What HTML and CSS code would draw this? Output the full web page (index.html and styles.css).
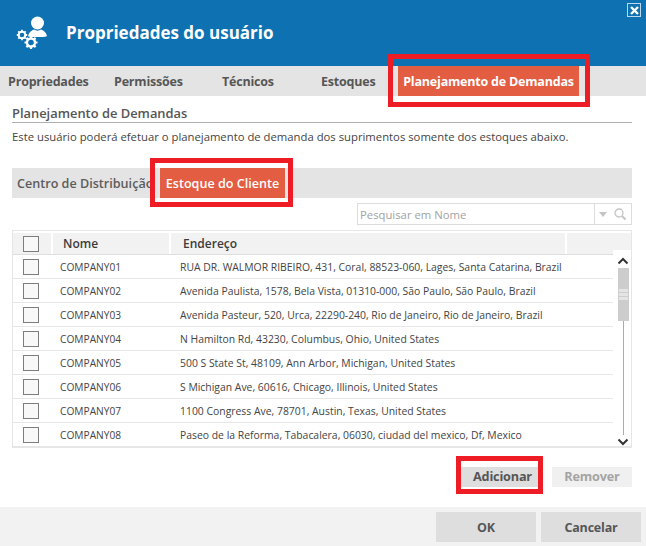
FILE: index.html
```html
<!DOCTYPE html>
<html lang="pt">
<head>
<meta charset="utf-8">
<title>Propriedades do usuário</title>
<link rel="stylesheet" href="styles.css">
</head>
<body>
<div class="dialog">
  <header class="header">
    <svg class="logo" width="40" height="40" viewBox="0 0 40 40">
      <circle cx="21.500" cy="9" r="6.500" fill="#fff"/>
      <path d="M12 22c1-4 4-6 6-6.500 2 1.500 5 1.500 7 0 2 .5 5 2.500 6 6.500-1 .8-3 1-6 1H16c-2 0-3-.2-4-1z" fill="#fff"/>
      <g fill="none" stroke="#fff">
        <circle cx="6" cy="21" r="3.300" stroke-width="2"/>
        <circle cx="15" cy="28.500" r="4" stroke-width="2.400"/>
        <path d="M6 15.800v2M6 24.200v2M.8 21h2M9.200 21h2M2.300 17.300l1.400 1.400M8.300 23.300l1.400 1.400M2.300 24.700l1.400-1.400M8.300 18.700l1.400-1.400" stroke-width="1.800"/>
        <path d="M15 22v2.500M15 32.500V35M8.500 28.500H11M19 28.500h2.500M10.400 23.900l1.800 1.800M17.800 31.300l1.800 1.800M10.400 33.100l1.800-1.800M17.800 25.700l1.800-1.800" stroke-width="2.200"/>
      </g>
    </svg>
    <h1 class="title">Propriedades do usuário</h1>
    <div class="close"><svg width="11" height="11" viewBox="0 0 11 11"><path d="M2 2l7 7M9 2l-7 7" stroke="#fff" stroke-width="2.400"/></svg></div>
  </header>
  <nav class="tabs">
    <span class="tab tab-1">Propriedades</span>
    <span class="tab tab-2">Permissões</span>
    <span class="tab tab-3">Técnicos</span>
    <span class="tab tab-4">Estoques</span>
    <span class="tab active">Planejamento de Demandas</span>
  </nav>
  <main class="content">
    <h2 class="section-title">Planejamento de Demandas</h2>
    <p class="desc">Este usuário poderá efetuar o planejamento de demanda dos suprimentos somente dos estoques abaixo.</p>
    <div class="subtabs">
      <span class="subtab">Centro de Distribuição</span>
      <span class="subtab active">Estoque do Cliente</span>
    </div>
    <div class="search-row">
      <div class="search">
        <span class="search-text">Pesquisar em Nome</span>
        <span class="search-tools">
          <svg width="8" height="5" viewBox="0 0 8 5"><path d="M0 0h8L4 5z" fill="#c4c4c4"/></svg>
          <svg width="12" height="12" viewBox="0 0 12 12"><circle cx="5" cy="5" r="4" fill="none" stroke="#c4c4c4" stroke-width="1.300"/><path d="M8 8l3.500 3.500" stroke="#c4c4c4" stroke-width="2"/></svg>
        </span>
      </div>
    </div>
    <div class="grid">
      <div class="grid-head">
        <div class="hc hc-check"><span class="check"></span></div>
        <div class="hc hc-name">Nome</div>
        <div class="hc hc-addr">Endereço</div>
        <div class="hc hc-rest"></div>
      </div>
      <div class="grid-body">
        <div class="rows">
          <div class="row"><span class="cell-check"><span class="check"></span></span><span class="cell-name">COMPANY01</span><span class="cell-addr">RUA DR. WALMOR RIBEIRO, 431, Coral, 88523-060, Lages, Santa Catarina, Brazil</span></div>
          <div class="row"><span class="cell-check"><span class="check"></span></span><span class="cell-name">COMPANY02</span><span class="cell-addr">Avenida Paulista, 1578, Bela Vista, 01310-000, São Paulo, São Paulo, Brazil</span></div>
          <div class="row"><span class="cell-check"><span class="check"></span></span><span class="cell-name">COMPANY03</span><span class="cell-addr">Avenida Pasteur, 520, Urca, 22290-240, Rio de Janeiro, Rio de Janeiro, Brazil</span></div>
          <div class="row"><span class="cell-check"><span class="check"></span></span><span class="cell-name">COMPANY04</span><span class="cell-addr">N Hamilton Rd, 43230, Columbus, Ohio, United States</span></div>
          <div class="row"><span class="cell-check"><span class="check"></span></span><span class="cell-name">COMPANY05</span><span class="cell-addr">500 S State St, 48109, Ann Arbor, Michigan, United States</span></div>
          <div class="row"><span class="cell-check"><span class="check"></span></span><span class="cell-name">COMPANY06</span><span class="cell-addr">S Michigan Ave, 60616, Chicago, Illinois, United States</span></div>
          <div class="row"><span class="cell-check"><span class="check"></span></span><span class="cell-name">COMPANY07</span><span class="cell-addr">1100 Congress Ave, 78701, Austin, Texas, United States</span></div>
          <div class="row"><span class="cell-check"><span class="check"></span></span><span class="cell-name">COMPANY08</span><span class="cell-addr">Paseo de la Reforma, Tabacalera, 06030, ciudad del mexico, Df, Mexico</span></div>
        </div>
        <div class="scrollbar">
          <svg class="arrow" width="12" height="8" viewBox="0 0 12 8"><path d="M1.500 6.500L6 2l4.500 4.500" fill="none" stroke="#333" stroke-width="2"/></svg>
          <div class="track">
            <div class="thumb"><span></span><span></span><span></span></div>
          </div>
          <svg class="arrow" width="12" height="8" viewBox="0 0 12 8"><path d="M1.500 1.500L6 6l4.500-4.500" fill="none" stroke="#333" stroke-width="2"/></svg>
        </div>
      </div>
    </div>
    <div class="actions">
      <span class="btn btn-add">Adicionar</span>
      <span class="btn btn-remove">Remover</span>
    </div>
  </main>
  <footer class="footer">
    <span class="btn-foot">OK</span>
    <span class="btn-foot">Cancelar</span>
  </footer>
  <div class="mark mark-tab"></div>
  <div class="mark mark-sub"></div>
  <div class="mark mark-add"></div>
</div>
</body>
</html>
```
FILE: styles.css
```css
* { box-sizing: border-box; }
html, body { margin: 0; padding: 0; }
body { font-family: "Open Sans", "Noto Sans", sans-serif; background: #fff; color: #444; }
.dialog { position: relative; width: 646px; height: 546px; overflow: hidden; display: flex; flex-direction: column; }

.header { height: 66px; background: #0e72b2; display: flex; align-items: center; padding-left: 16px; position: relative; flex: none; }
.logo { flex: none; margin-top: 2px; }
.title { margin: 0 0 1px 10px; font-size: 17px; font-weight: 700; color: #fff; letter-spacing: 0; }
.close { position: absolute; top: 3px; right: 5px; width: 14px; height: 14px; border: 1px solid #bcd9ec; display: flex; align-items: center; justify-content: center; }

.tabs { height: 30px; background: #e4e4e4; display: flex; align-items: stretch; flex: none; padding-left: 8px; }
.tab { font-size: 12.500px; font-weight: 700; letter-spacing: -0.200px; color: #565656; display: flex; align-items: center; white-space: nowrap; }
.tab-1 { width: 106px; }
.tab-2 { width: 108px; }
.tab-3 { width: 99px; }
.tab-4 { width: 77px; }
.tab.active { background: #e35d42; color: #fff; width: 181px; justify-content: center; }

.content { flex: 1; padding: 0 14px 0 12px; display: flex; flex-direction: column; }
.section-title { margin: 0; height: 27px; padding-top: 8px; font-size: 12.900px; line-height: 18px; font-weight: 600; color: #565656; border-bottom: 1px solid #b0b0b0; }
.desc { margin: 0; height: 45px; padding-top: 6px; font-size: 11.300px; line-height: 16px; color: #444; white-space: nowrap; }

.subtabs { height: 30px; background: #e4e4e4; display: flex; align-items: stretch; flex: none; }
.subtab { font-size: 12.600px; font-weight: 600; color: #5c5c5c; display: flex; align-items: center; white-space: nowrap; }
.subtabs .subtab:first-child { width: 148px; padding-left: 5px; overflow: hidden; }
.subtab.active { background: #e35d42; color: #fff; width: 125px; justify-content: center; }

.search-row { display: flex; justify-content: flex-end; margin-top: 5px; flex: none; }
.search { width: 275px; height: 22px; border: 1px solid #dcdcdc; display: flex; align-items: center; background: #fff; }
.search-text { flex: 1; font-size: 11.300px; color: #a2a2a2; padding-left: 2px; }
.search-tools { width: 37px; height: 20px; border-left: 1px solid #dcdcdc; display: flex; align-items: center; justify-content: space-between; padding: 0 5px 0 4px; }

.grid { margin-top: 5px; height: 218px; border: 1px solid #e6e6e6; border-bottom-width: 2px; display: flex; flex-direction: column; flex: none; position: relative; }
.grid-head { height: 24px; display: flex; gap: 2px; padding-top: 2px; border-bottom: 1px solid #dedede; flex: none; }
.hc { background: #f2f2f2; font-size: 12px; font-weight: 600; color: #3c3c3c; display: flex; align-items: center; }
.hc-check { width: 38px; padding-left: 10px; }
.hc-name { width: 116px; padding-left: 10px; }
.hc-addr { width: 394px; padding-left: 12px; }
.hc-rest { flex: 1; }

.grid-body { flex: 1; display: flex; min-height: 0; }
.rows { width: 600px; flex: none; }
.row { height: 24px; display: flex; align-items: center; border-bottom: 1px solid #e6e6e6; font-size: 10.400px; color: #444; white-space: nowrap; }
.row:last-child { border-bottom: none; }
.cell-check { width: 47px; padding-left: 10px; display: flex; }
.cell-name { width: 120px; font-size: 10.200px; }
.check { display: block; width: 16px; height: 16px; border: 1px solid #7d7d7d; background: #f8f8f8; }

.scrollbar { flex: 1; display: flex; flex-direction: column; align-items: center; padding-top: 7px; padding-left: 2px; margin-top: -5px; background: #fff; position: relative; }
.arrow { flex: none; }
.track { flex: 1; width: 1px; background: #aaa; margin: 3px 0; position: relative; }
.thumb { position: absolute; top: 0; left: -5px; width: 11px; height: 53px; background: #cdcdcd; display: flex; flex-direction: column; justify-content: center; gap: 1px; align-items: center; }
.thumb span { display: block; width: 9px; height: 3px; background: #e4e4e4; }

.actions { display: flex; justify-content: flex-end; gap: 14px; margin-top: 19px; flex: none; }
.btn { height: 20px; padding-bottom: 2px; font-size: 12.700px; font-weight: 700; letter-spacing: -0.200px; display: flex; align-items: center; justify-content: center; }
.btn-add { width: 77px; padding-left: 6px; background: #dedede; color: #565656; }
.btn-remove { width: 80px; background: #f0f0f0; color: #a4a4a4; }

.footer { height: 39px; background: #f2f2f2; display: flex; justify-content: flex-end; gap: 5px; padding: 5px 5px 4px 0; flex: none; }
.btn-foot { width: 100px; height: 30px; background: #dedede; color: #565656; font-size: 12.500px; font-weight: 700; letter-spacing: -0.200px; display: flex; align-items: center; justify-content: center; }

.mark { position: absolute; border: 5px solid #ee1c25; pointer-events: none; }
.mark-tab { left: 388px; top: 54px; width: 202px; height: 53px; }
.mark-sub { left: 150px; top: 158px; width: 143px; height: 49px; }
.mark-add { left: 456px; top: 456px; width: 87px; height: 38px; }
```
